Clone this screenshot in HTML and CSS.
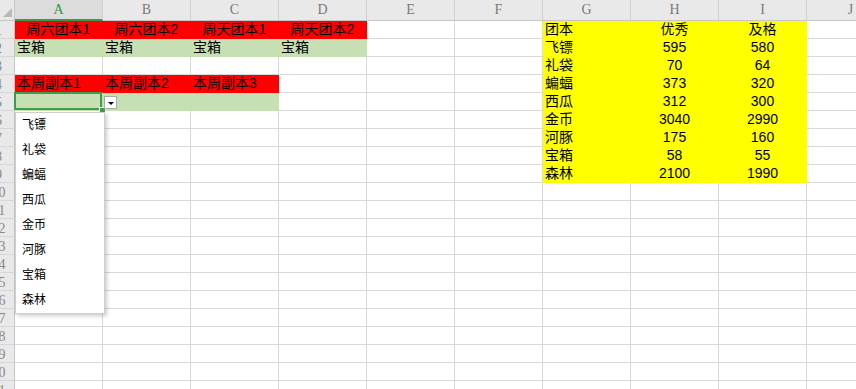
FILE: index.html
```html
<!DOCTYPE html>
<html lang="zh-CN">
<head>
    <meta charset="UTF-8">
    <meta name="viewport" content="width=device-width, initial-scale=1.0">
    <title>团本</title>
    <link rel="stylesheet" href="styles.css">
</head>
<body>
    <!-- Worksheet -->
    <div class="sheet" id="sheet"></div>

    <script>
        const sheet = document.getElementById('sheet');
        const cols = ['A', 'B', 'C', 'D', 'E', 'F', 'G', 'H', 'I', 'J'];
        const rowCount = 21;

        const cells = {
            A1: ['周六团本1', 'red center'], B1: ['周六团本2', 'red center'],
            C1: ['周天团本1', 'red center'], D1: ['周天团本2', 'red center'],
            A2: ['宝箱', 'green'], B2: ['宝箱', 'green'], C2: ['宝箱', 'green'], D2: ['宝箱', 'green'],
            A4: ['本周副本1', 'red'], B4: ['本周副本2', 'red'], C4: ['本周副本3', 'red'],
            A5: ['', 'green selected'], B5: ['', 'green'], C5: ['', 'green']
        };

        const teams = [
            ['团本', '优秀', '及格'],
            ['飞镖', '595', '580'],
            ['礼袋', '70', '64'],
            ['蝙蝠', '373', '320'],
            ['西瓜', '312', '300'],
            ['金币', '3040', '2990'],
            ['河豚', '175', '160'],
            ['宝箱', '58', '55'],
            ['森林', '2100', '1990']
        ];

        teams.forEach((row, i) => {
            cells['G' + (i + 1)] = [row[0], 'yellow'];
            cells['H' + (i + 1)] = [row[1], 'yellow center'];
            cells['I' + (i + 1)] = [row[2], 'yellow center'];
        });

        const options = ['飞镖', '礼袋', '蝙蝠', '西瓜', '金币', '河豚', '宝箱', '森林'];

        function add(cls, text) {
            const el = document.createElement('div');
            el.className = cls;
            if (text) el.textContent = text;
            sheet.appendChild(el);
            return el;
        }

        // header row
        add('corner');
        cols.forEach(c => add(c === 'A' ? 'col-head active' : 'col-head', c));

        for (let r = 1; r <= rowCount; r++) {
            const head = add('row-head');
            const num = document.createElement('span');
            num.textContent = r;
            head.appendChild(num);

            cols.forEach(c => {
                const data = cells[c + r];
                const cell = add(data ? 'cell ' + data[1] : 'cell', data ? data[0] : '');

                if (data && data[1].includes('selected')) {
                    cell.innerHTML =
                        '<div class="sel-box"></div>' +
                        '<div class="sel-handle"></div>' +
                        '<div class="drop-btn"><span class="drop-arrow"></span></div>' +
                        '<div class="drop-list">' +
                        options.map(o => '<div class="drop-item">' + o + '</div>').join('') +
                        '</div>';
                }
            });
        }
    </script>
</body>
</html>
```

FILE: styles.css
```css
body {
    margin: 0;
    padding: 0;
    width: 856px;
    height: 389px;
    overflow: hidden;
    background: #ffffff;
    font-family: "Liberation Sans", "Noto Sans CJK SC", sans-serif;
}

.sheet {
    display: grid;
    grid-template-columns: 15px repeat(10, 88px);
    grid-template-rows: 21px;
    grid-auto-rows: 18px;
    width: max-content;
}

/* Headers */
.corner {
    background: #e9e9e9;
    border-right: 1px solid #c6c6c6;
    border-bottom: 1px solid #c6c6c6;
    position: relative;
}

.corner::after {
    content: "";
    position: absolute;
    right: 2px;
    bottom: 3px;
    border-left: 9px solid transparent;
    border-bottom: 9px solid #b8b8b8;
}

.col-head {
    box-sizing: border-box;
    background: #e9e9e9;
    border-right: 1px solid #d0d0d0;
    border-bottom: 1px solid #c6c6c6;
    font-family: "Liberation Serif", serif;
    font-size: 14px;
    line-height: 20px;
    text-align: center;
    color: #7a7a7a;
    overflow: hidden;
}

.col-head.active {
    background: #dcdcdc;
    color: #2f9a3f;
    border-bottom: 2px solid #3b9a48;
    line-height: 19px;
}

.row-head {
    box-sizing: border-box;
    background: #e9e9e9;
    border-right: 1px solid #c6c6c6;
    border-bottom: 1px solid #d6d6d6;
    overflow: hidden;
    white-space: nowrap;
}

.row-head span {
    display: inline-block;
    width: 27px;
    margin-left: -15px;
    text-align: center;
    font-family: "Liberation Serif", serif;
    font-size: 14px;
    line-height: 17px;
    color: #8a8a8a;
}

/* Cells */
.cell {
    box-sizing: border-box;
    border-right: 1px solid #d9d9d9;
    border-bottom: 1px solid #d9d9d9;
    padding: 0 2px;
    font-size: 14px;
    line-height: 17px;
    color: #000000;
    white-space: nowrap;
    overflow: hidden;
}

.center {
    text-align: center;
}

.red {
    background: #ff0000;
    border-color: #ff0000;
}

.green {
    background: #c6e0b4;
    border-color: #c6e0b4;
}

.yellow {
    background: #ffff00;
    border-color: #ffff00;
}

/* Selected cell with dropdown */
.selected {
    position: relative;
    overflow: visible;
    z-index: 5;
}

.sel-box {
    position: absolute;
    left: -1px;
    top: -1px;
    width: 88px;
    height: 18px;
    box-sizing: border-box;
    border: 2px solid #3f9c4c;
}

.sel-handle {
    position: absolute;
    left: 84px;
    top: 14px;
    width: 5px;
    height: 5px;
    background: #3f9c4c;
    border: 1px solid #ffffff;
}

.drop-btn {
    position: absolute;
    left: 89px;
    top: 3px;
    width: 13px;
    height: 13px;
    box-sizing: border-box;
    background: #ffffff;
    border: 1px solid #a9a9a9;
}

.drop-arrow {
    position: absolute;
    left: 3px;
    top: 5px;
    border-left: 3px solid transparent;
    border-right: 3px solid transparent;
    border-top: 3px solid #000000;
}

.drop-list {
    position: absolute;
    left: 0;
    top: 19px;
    width: 90px;
    box-sizing: border-box;
    background: #ffffff;
    border: 1px solid #cfcfcf;
    box-shadow: 2px 2px 4px rgba(0, 0, 0, 0.2);
}

.drop-item {
    height: 25px;
    padding-left: 6px;
    font-size: 12px;
    line-height: 25px;
    color: #000000;
}
```
